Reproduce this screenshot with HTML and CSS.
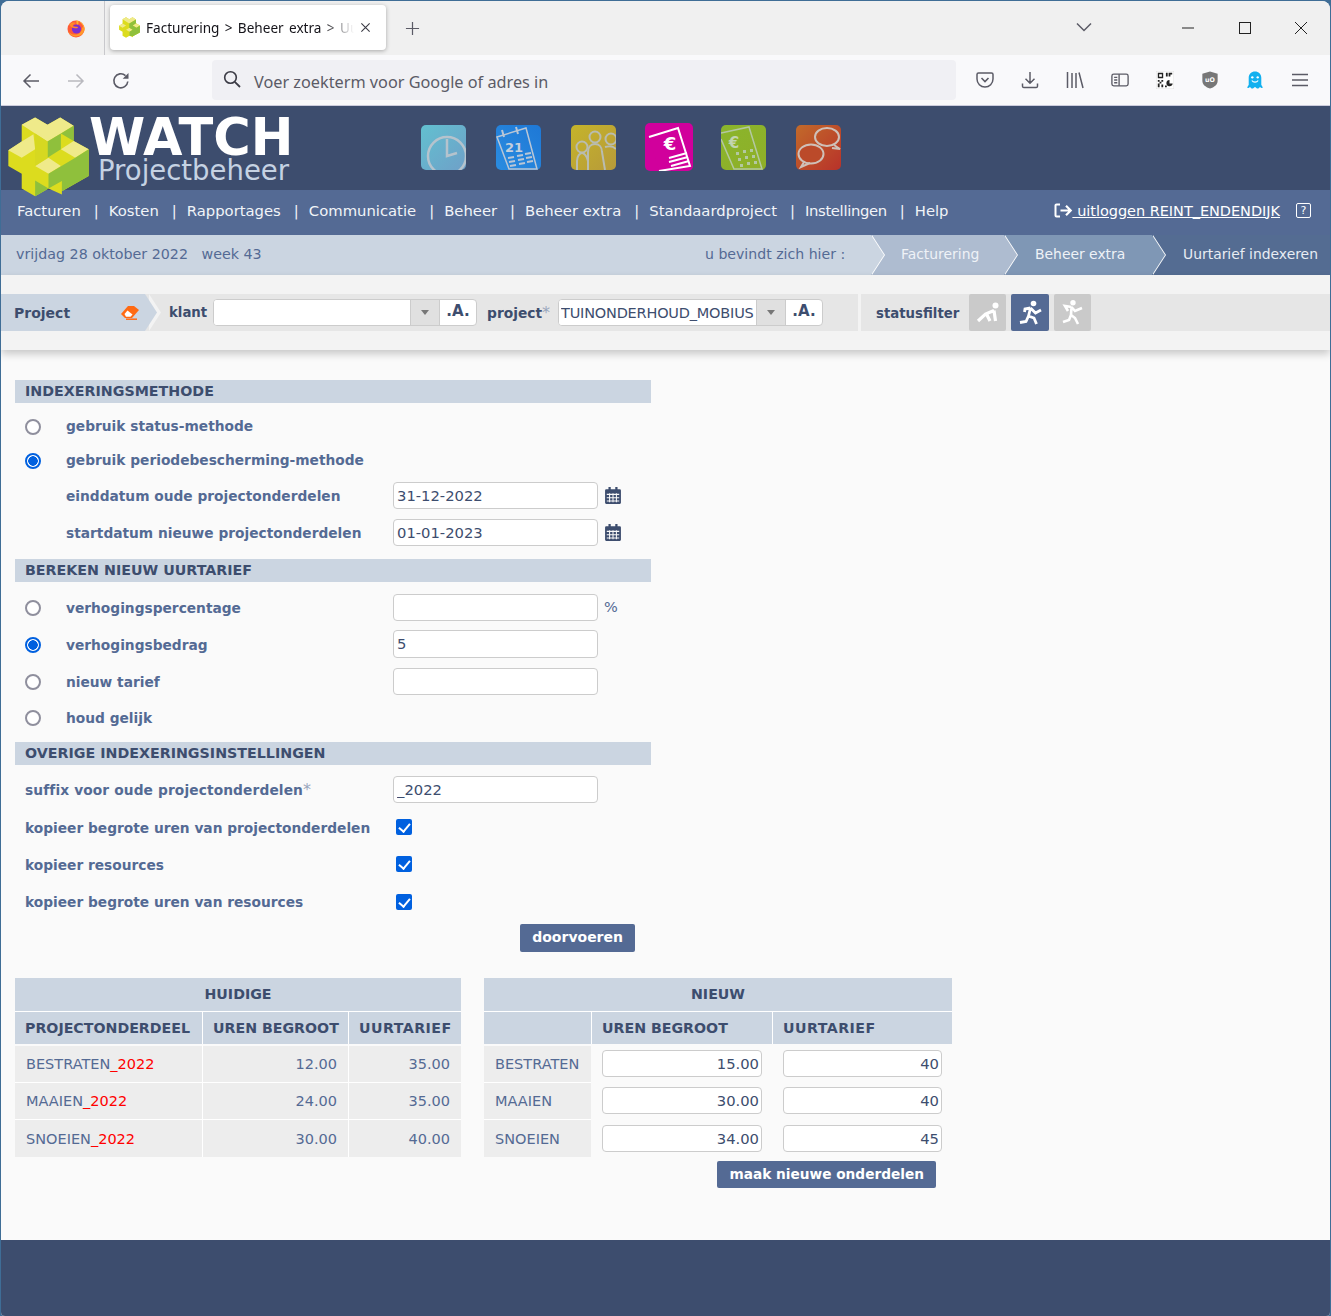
FILE: index.html
```html
<!DOCTYPE html>
<html lang="nl">
<head>
<meta charset="utf-8">
<title>Facturering &gt; Beheer extra &gt; Uurtarief indexeren</title>
<link rel="stylesheet" href="styles.css">
</head>
<body>
<div class="window">
  <div class="tabbar">
    <div class="ff-slot">
      <svg class="ff" viewBox="0 0 20 20"><circle cx="10" cy="11" r="8.5" fill="#ff5a36"/><path d="M10 2.500c5 .5 8.500 4 8.500 8.500 0 1-.2 2-.5 2.800C18.500 8 15 4 12 3.500c1 1.500.5 3-.5 3.500C10 6.500 11 4 10 2.500z" fill="#ffb62c"/><path d="M18.400 9.500c.5 5-3 9-8.400 9-4 0-7-2.500-8-5.500 2 3 5.500 4 8 3.500 4-.5 6-3.500 6-6 0-1.500 1.500-1.500 2.400-1z" fill="#ff9a2a"/><circle cx="10.500" cy="11" r="4.600" fill="#7b2fd0"/><path d="M3 6.500c2-2 5-2.500 7-1.500-1.500.5-3 1.500-3.500 3 2 1 5 .2 5.500 1.500-1 1.500-3 .5-4.500.5C5.500 9.500 4 8 3 6.500z" fill="#ff8a2a"/></svg>
    </div>
    <div class="tab">
      <svg class="favicon" viewBox="24 19 242 238"><path d="M65 42L105 20 142 42 180 20 220 45V90L265 115V195L185 240V250L145 232 105 255 65 232V188L25 165V118L65 92z" fill="#dcdc1e"/><path d="M65 42L105 20 142 42 180 20 220 45 182 68 142 92 105 68zM25 118L65 92 105 115 65 140zM220 90L265 115 225 140 182 115zM105 165L145 140 182 165 145 188z" fill="#efea8a"/><path d="M142 92L182 68 220 45V90L182 115 225 140 265 115V195L185 240 145 232V188L182 165 142 140z" fill="#8fc03c"/></svg>
      <span class="tab-title">Facturering &gt; Beheer extra &gt; Uurtarief indexeren</span>
      <svg class="tab-close" viewBox="0 0 12 12"><path d="M1.500 1.500l9 9M10.500 1.500l-9 9" stroke="#3b3b45" stroke-width="1.200" fill="none"/></svg>
    </div>
    <svg class="newtab" viewBox="0 0 16 16"><path d="M8 1v14M1 8h14" stroke="#5b5b66" stroke-width="1.300" fill="none"/></svg>
    <div class="tabbar-fill"></div>
    <svg class="tablist" viewBox="0 0 16 10"><path d="M1 1.500l7 7 7-7" stroke="#5b5b66" stroke-width="1.500" fill="none"/></svg>
    <svg class="winbtn minim" viewBox="0 0 12 12"><path d="M0 6h12" stroke="#222" stroke-width="1" fill="none"/></svg>
    <svg class="winbtn maxim" viewBox="0 0 12 12"><rect x=".5" y=".5" width="11" height="11" stroke="#222" fill="none"/></svg>
    <svg class="winbtn closew" viewBox="0 0 12 12"><path d="M0 0l12 12M12 0L0 12" stroke="#222" stroke-width="1" fill="none"/></svg>
  </div>

  <div class="toolbar">
    <svg class="tool t-back" viewBox="0 0 18 16"><path d="M17 8H2M8.500 1.500L2 8l6.500 6.500" stroke="#5b5b66" stroke-width="1.500" fill="none"/></svg>
    <svg class="tool t-fwd" viewBox="0 0 18 16"><path d="M1 8h15M9.500 1.500L16 8l-6.500 6.500" stroke="#b9b9bf" stroke-width="1.500" fill="none"/></svg>
    <svg class="tool t-reload" viewBox="0 0 18 18"><path d="M15.800 9.500A7 7 0 1 1 13.500 3.600" stroke="#5b5b66" stroke-width="1.600" fill="none"/><path d="M16.500 1v5.800h-5.800z" fill="#5b5b66"/></svg>
    <div class="urlbar">
      <svg class="mag" viewBox="0 0 18 18"><circle cx="7.500" cy="7.500" r="5.800" stroke="#3b3b45" stroke-width="1.600" fill="none"/><path d="M11.800 11.800l5.200 5.200" stroke="#3b3b45" stroke-width="1.800" fill="none"/></svg>
      <span class="url-text">Voer zoekterm voor Google of adres in</span>
    </div>
    <div class="tools-right">
      <svg class="rt" viewBox="0 0 18 16"><path d="M2.500 1h13A1.500 1.500 0 0 1 17 2.500V7a8 8 0 0 1-16 0V2.500A1.500 1.500 0 0 1 2.500 1z" stroke="#5b5b66" stroke-width="1.500" fill="none"/><path d="M5.500 6L9 9.500 12.500 6" stroke="#5b5b66" stroke-width="1.600" fill="none"/></svg>
      <svg class="rt" viewBox="0 0 18 18"><path d="M9 1v11M4.500 7.800L9 12.300l4.500-4.500M1.500 12.500v2.800a1.300 1.300 0 0 0 1.300 1.200h12.400a1.300 1.300 0 0 0 1.300-1.200v-2.800" stroke="#5b5b66" stroke-width="1.500" fill="none"/></svg>
      <svg class="rt" viewBox="0 0 18 18"><path d="M1.500 1v16M6 2v15M10 2v15M13 1.500L17 17" stroke="#5b5b66" stroke-width="1.500" fill="none"/></svg>
      <svg class="rt" viewBox="0 0 20 16"><rect x="1" y="1.500" width="18" height="13" rx="2" stroke="#5b5b66" stroke-width="1.500" fill="none"/><path d="M9 1.500v13M3.500 5H7M3.500 8H7M3.500 11H7" stroke="#5b5b66" stroke-width="1.500" fill="none"/></svg>
      <svg class="rt" viewBox="0 0 20 20"><rect width="20" height="20" fill="#fff" stroke="#ddd"/><path d="M2 2h6v6H2zM3.500 3.500v3h3v-3zM11 2h2v4h-2zM14 2h4v2h-2v2h-2zM2 10h2v2H2zM6 10h2v2H6zM4 12h2v2H4zM2 14h2v4H2zM6 15h2v3H6zM10 16h2v2h-2z" fill="#222"/><path d="M15 10v4h3.500A3.500 3.500 0 1 1 15 10z" fill="#222"/></svg>
      <svg class="rt" viewBox="0 0 18 20"><path d="M9 .5L17.500 3v8c0 4-4 7-8.500 8.500C4.500 18 .5 15 .5 11V3z" fill="#777"/><text class="ub" x="9" y="12.500" text-anchor="middle">uO</text></svg>
      <svg class="rt" viewBox="0 0 18 20"><path d="M9 .5c4 0 7 3 7 7v8c1 1 1.500 2 1.500 3.500-1.500 0-2.500-.5-3-1.500-.5 1-1.500 2-2.500 2s-2-1-3-2c-1 1-2 2-3 2s-2-1-2.500-2c-.5 1-1.500 1.500-3 1.500 0-1.500.5-2.500 1.500-3.500v-8c0-4 3-7 7-7z" fill="#12b0ef"/><circle cx="6" cy="7" r="1.300" fill="#fff"/><circle cx="12" cy="7" r="1.300" fill="#fff"/><path d="M5.500 10.500c1.500 2.500 5.500 2.500 7 0" stroke="#fff" stroke-width="1.200" fill="none"/></svg>
      <svg class="rt rt-menu" viewBox="0 0 16 14"><path d="M0 1.500h16M0 7h16M0 12.500h16" stroke="#5b5b66" stroke-width="1.500" fill="none"/></svg>
    </div>
  </div>

  <header class="site-head">
    <svg class="logo" viewBox="24 19 242 238">
      <path d="M65 42L105 20 142 42 180 20 220 45V90L265 115V195L185 240V250L145 232 105 255 65 232V188L25 165V118L65 92z" fill="#dcdc1e"/>
      <path d="M65 42L105 20 142 42 180 20 220 45 182 68 142 92 105 68z" fill="#efea8a"/>
      <path d="M25 118L65 92 100 70 105 115 65 140z" fill="#efea8a"/>
      <path d="M220 90L265 115 225 140 182 115z" fill="#efea8a"/>
      <path d="M105 165L145 140 182 165 145 188z" fill="#efea8a"/>
      <path d="M142 92L182 68V115L142 140z" fill="#8fc03c"/>
      <path d="M182 68L220 45V90L182 68z" fill="#8fc03c"/>
      <path d="M145 188L225 140 265 115V195L185 240V210L145 232z" fill="#8fc03c"/>
      <path d="M105 208L145 232 105 255z" fill="#8fc03c"/>
      <path d="M105 68L142 92V140L105 165z" fill="#d6d821"/>
    </svg>
    <div class="brand">
      <div class="brand-main">WATCH</div>
      <div class="brand-sub">Projectbeheer</div>
    </div>
    <div class="apps">
      <svg class="app" viewBox="0 0 45 45"><defs><linearGradient id="g1" x1="0" y1="0" x2="1" y2="1"><stop offset="0" stop-color="#62c0d0"/><stop offset="1" stop-color="#6fa0c8"/></linearGradient><clipPath id="c"><rect width="45" height="45" rx="5"/></clipPath></defs><rect width="45" height="45" rx="5" fill="url(#g1)"/><g clip-path="url(#c)"><circle cx="26" cy="31" r="19" stroke="#b5c3cd" stroke-width="2.500" fill="none"/><path d="M26 14v17l10-3" stroke="#b5c3cd" stroke-width="2.500" fill="none"/></g></svg>
      <svg class="app" viewBox="0 0 45 45"><defs><linearGradient id="g2" x1="1" y1="0" x2="0" y2="1"><stop offset="0" stop-color="#1e78d6"/><stop offset="1" stop-color="#2a8ce0"/></linearGradient></defs><rect width="45" height="45" rx="5" fill="url(#g2)"/><path d="M1 12L30 3 41 44H13z" stroke="#b9c6d6" stroke-width="1.500" fill="none"/><path d="M6 5l2 7M20 2l2 7" stroke="#b9c6d6" stroke-width="2" fill="none"/><text class="cal-num" x="18" y="27" text-anchor="middle">21</text><path d="M12 33l6-1M21 31l6-1M29 29l6-1M13 37l6-1M22 35l6-1M30 33l6-1M14 41l6-1M23 39l6-1M31 37l6-1" stroke="#b9c6d6" stroke-width="2"/></svg>
      <svg class="app" viewBox="0 0 45 45"><defs><linearGradient id="g3" x1="0" y1="0" x2="1" y2="1"><stop offset="0" stop-color="#c5b42a"/><stop offset="1" stop-color="#b79a3a"/></linearGradient><clipPath id="c3"><rect width="45" height="45" rx="5"/></clipPath></defs><rect width="45" height="45" rx="5" fill="url(#g3)"/><g stroke="#b9bcb0" stroke-width="2" fill="none" clip-path="url(#c3)"><circle cx="11" cy="22" r="5.500"/><circle cx="24" cy="12" r="5.500"/><circle cx="40" cy="14" r="5.500"/><path d="M6 45V36c0-5 3-8 5-8s5 3 6 8v9M17 45V27c0-5 3-8 7-8s7 3 7 8l3 18M34 22c3-1 8-1 11 2"/></g></svg>
      <svg class="app app-big" viewBox="0 0 48 48"><rect width="48" height="48" rx="5" fill="#d1009c"/><path d="M4 14L33 5 45 43 14 48" stroke="#fff" stroke-width="2" fill="#d1009c"/><text class="euro" x="25" y="27" text-anchor="middle">€</text><path d="M24 35l18-5M24 39l19-5M26 43l18-5" stroke="#fff" stroke-width="2"/></svg>
      <svg class="app" viewBox="0 0 45 45"><defs><linearGradient id="g5" x1="0" y1="0" x2="1" y2="1"><stop offset="0" stop-color="#8ab52c"/><stop offset="1" stop-color="#8faf28"/></linearGradient></defs><rect width="45" height="45" rx="5" fill="url(#g5)"/><path d="M0 8L28 2 41 44H13L0 14" stroke="#b3c8a0" stroke-width="1.500" fill="none"/><text class="euro2" x="13" y="23" text-anchor="middle">€</text><g fill="#b3c8a0"><rect x="15" y="27" width="3" height="3"/><rect x="22" y="25" width="3" height="3"/><rect x="29" y="24" width="3" height="3"/><rect x="17" y="33" width="3" height="3"/><rect x="24" y="31" width="3" height="3"/><rect x="31" y="30" width="3" height="3"/><rect x="19" y="39" width="3" height="3"/><rect x="26" y="37" width="3" height="3"/><rect x="33" y="36" width="3" height="3"/></g></svg>
      <svg class="app" viewBox="0 0 45 45"><defs><linearGradient id="g6" x1="0" y1="0" x2="1" y2="1"><stop offset="0" stop-color="#c26a2a"/><stop offset="1" stop-color="#b8322a"/></linearGradient></defs><rect width="45" height="45" rx="5" fill="url(#g6)"/><g stroke="#cfc0b8" stroke-width="2" fill="none"><ellipse cx="31" cy="12" rx="12" ry="9"/><path d="M38 20l6 4-8-1"/><ellipse cx="15" cy="29" rx="12.500" ry="9.500" fill="#bb4a2a"/><path d="M8 37l-3 5 9-4"/></g></svg>
    </div>
  </header>

  <nav class="mainnav">
    <ul class="menu">
      <li>Facturen</li><li>Kosten</li><li>Rapportages</li><li>Communicatie</li><li>Beheer</li><li>Beheer extra</li><li>Standaardproject</li><li class="tight">Instellingen</li><li>Help</li>
    </ul>
    <div class="userbox">
      <a class="logout"><svg class="logout-ic" viewBox="0 0 19 15"><path d="M6 1.500H2.500a1 1 0 0 0-1 1v10a1 1 0 0 0 1 1H6" stroke="#fff" stroke-width="2" fill="none"/><path d="M6.500 7.500H17M12 2.800l4.700 4.700L12 12.200" stroke="#fff" stroke-width="2.200" fill="none"/></svg><span class="logout-t"> uitloggen REINT_ENDENDIJK</span></a>
      <span class="helpbox">?</span>
    </div>
  </nav>

  <div class="crumbbar">
    <div class="today">vrijdag 28 oktober 2022 &nbsp; week 43</div>
    <div class="crumbs">
      <div class="crumb c0">u bevindt zich hier :</div>
      <div class="crumb c1">Facturering</div>
      <div class="crumb c2">Beheer extra</div>
      <div class="crumb c3">Uurtarief indexeren</div>
    </div>
  </div>

  <div class="filterwrap">
    <div class="filter">
      <div class="filter-left">
        <div class="proj-tab">
          <span>Project</span>
          <svg class="eraser" viewBox="0 0 18 14"><path d="M0 8l7-8h6l5 4-7 8H4z" fill="#ff6a13"/><path d="M3.500 8l3-3.500 5 4-2 2.200H5z" fill="#fff"/><path d="M5 13.200h11" stroke="#ff6a13" stroke-width="1.500"/></svg>
        </div>
        <label class="f-label f-klant">klant</label>
        <div class="combo c-klant"><input class="combo-in" type="text" value=""><span class="combo-dd"><i class="caret"></i></span><span class="combo-a">.A.</span></div>
        <label class="f-label f-proj">project<em class="star">*</em></label>
        <div class="combo c-proj"><input class="combo-in" type="text" value="TUINONDERHOUD_MOBIUS"><span class="combo-dd"><i class="caret"></i></span><span class="combo-a">.A.</span></div>
      </div>
      <div class="filter-right">
        <span class="f-label f-status">statusfilter</span>
        <span class="stat s1"><svg viewBox="0 0 26 26"><circle cx="20.500" cy="5.500" r="3" fill="#fff"/><path d="M19 10.500L10.500 14 3 21M12 15l3 6M19 10.500l1.500 10.500" stroke="#fff" stroke-width="3.200" fill="none"/></svg></span>
        <span class="stat s2"><svg viewBox="0 0 26 26"><circle cx="16.500" cy="3.500" r="2.800" fill="#fff"/><path d="M13.500 8L11.500 16 17 18 19.500 24M11.500 16L9 21.500 3 22.500M13.500 8L18.500 13 24 10M13.500 8L8 9 7.500 12" stroke="#fff" stroke-width="2.800" fill="none"/></svg></span>
        <span class="stat s3"><svg viewBox="0 0 26 26"><circle cx="13" cy="2.800" r="2.700" fill="#fff"/><path d="M11.500 7L11 15 15 18 18 24M11 15L9 20 3 22M11.500 7L15 11 22 8M11.500 7L5 6 8 11" stroke="#fff" stroke-width="2.600" fill="none"/></svg></span>
      </div>
    </div>
  </div>

  <main class="content">
    <h2 class="bar">INDEXERINGSMETHODE</h2>
    <div class="rows rows-a">
      <div class="row"><input class="radio" type="radio" name="m"><span class="lab">gebruik status-methode</span></div>
      <div class="row"><input class="radio" type="radio" name="m" checked><span class="lab">gebruik periodebescherming-methode</span></div>
      <div class="row"><span class="lab ind">einddatum oude projectonderdelen</span><input class="txt" type="text" value="31-12-2022"><svg class="cal" viewBox="0 0 14 15"><path d="M3 0h2v2h4V0h2v2h2a1 1 0 0 1 1 1v11a1 1 0 0 1-1 1H1a1 1 0 0 1-1-1V3a1 1 0 0 1 1-1h2z" fill="#3d4d6e"/><path d="M1.500 6.500h11M1.500 9.500h11M1.500 12.300h11M4 5.500v8M7 5.500v8M10 5.500v8" stroke="#fafafa" stroke-width=".9"/></svg></div>
      <div class="row"><span class="lab ind">startdatum nieuwe projectonderdelen</span><input class="txt" type="text" value="01-01-2023"><svg class="cal" viewBox="0 0 14 15"><path d="M3 0h2v2h4V0h2v2h2a1 1 0 0 1 1 1v11a1 1 0 0 1-1 1H1a1 1 0 0 1-1-1V3a1 1 0 0 1 1-1h2z" fill="#3d4d6e"/><path d="M1.500 6.500h11M1.500 9.500h11M1.500 12.300h11M4 5.500v8M7 5.500v8M10 5.500v8" stroke="#fafafa" stroke-width=".9"/></svg></div>
    </div>
    <h2 class="bar">BEREKEN NIEUW UURTARIEF</h2>
    <div class="rows rows-b">
      <div class="row"><input class="radio" type="radio" name="b"><span class="lab ind2">verhogingspercentage</span><input class="txt" type="text" value=""><span class="pct">%</span></div>
      <div class="row"><input class="radio" type="radio" name="b" checked><span class="lab ind2">verhogingsbedrag</span><input class="txt tall" type="text" value="5"></div>
      <div class="row"><input class="radio" type="radio" name="b"><span class="lab ind2">nieuw tarief</span><input class="txt" type="text" value=""></div>
      <div class="row"><input class="radio" type="radio" name="b"><span class="lab">houd gelijk</span></div>
    </div>
    <h2 class="bar">OVERIGE INDEXERINGSINSTELLINGEN</h2>
    <div class="rows rows-c">
      <div class="row row-plain"><span class="lab w368 wide">suffix voor oude projectonderdelen<em class="star">*</em></span><input class="txt" type="text" value="_2022"></div>
      <div class="row row-plain"><span class="lab w368">kopieer begrote uren van projectonderdelen</span><input class="check" type="checkbox" checked></div>
      <div class="row row-plain"><span class="lab w368">kopieer resources</span><input class="check" type="checkbox" checked></div>
      <div class="row row-plain"><span class="lab w368">kopieer begrote uren van resources</span><input class="check" type="checkbox" checked></div>
    </div>
    <div class="act act-1"><button class="btn" type="button">doorvoeren</button></div>

    <div class="tables">
      <table class="grid g-old">
        <colgroup><col class="o1"><col class="o2"><col class="o3"></colgroup>
        <thead>
          <tr class="hr1"><th colspan="3" class="ctr">HUIDIGE</th></tr>
          <tr class="hr2"><th>PROJECTONDERDEEL</th><th>UREN BEGROOT</th><th class="spaced">UURTARIEF</th></tr>
        </thead>
        <tbody>
          <tr><td>BESTRATEN<span class="red">_2022</span></td><td class="num">12.00</td><td class="num">35.00</td></tr>
          <tr><td>MAAIEN<span class="red">_2022</span></td><td class="num">24.00</td><td class="num">35.00</td></tr>
          <tr class="tr3"><td>SNOEIEN<span class="red">_2022</span></td><td class="num">30.00</td><td class="num">40.00</td></tr>
        </tbody>
      </table>
      <div class="newwrap">
        <table class="grid g-new">
          <colgroup><col class="n1"><col class="n2"><col class="n3"></colgroup>
          <thead>
            <tr class="hr1"><th colspan="3" class="ctr">NIEUW</th></tr>
            <tr class="hr2"><th></th><th>UREN BEGROOT</th><th class="spaced">UURTARIEF</th></tr>
          </thead>
          <tbody>
            <tr><td>BESTRATEN</td><td class="inp"><input class="txt r" type="text" value="15.00"></td><td class="inp"><input class="txt r" type="text" value="40"></td></tr>
            <tr><td>MAAIEN</td><td class="inp"><input class="txt r" type="text" value="30.00"></td><td class="inp"><input class="txt r" type="text" value="40"></td></tr>
            <tr class="tr3"><td>SNOEIEN</td><td class="inp"><input class="txt r" type="text" value="34.00"></td><td class="inp"><input class="txt r" type="text" value="45"></td></tr>
          </tbody>
        </table>
        <div class="act act-2"><button class="btn btn-2" type="button">maak nieuwe onderdelen</button></div>
      </div>
    </div>
  </main>
  <footer class="site-foot"></footer>
</div>
</body>
</html>
```
FILE: styles.css
```css
* { box-sizing: border-box; }
html, body { margin: 0; padding: 0; }
body { background: #3f6d96; width: 1331px; height: 1316px; overflow: hidden; font-family: "DejaVu Sans", Verdana, sans-serif; }
.window { margin: 1px 1px 0 1px; height: 1315px; background: #fafafa; border-radius: 8px 8px 4px 4px; overflow: hidden; display: flex; flex-direction: column; }

/* browser chrome */
.tabbar { height: 54px; background: #f0f0f0; display: flex; align-items: flex-start; flex: none; font-family: "Noto Sans", sans-serif; }
.ff-slot { width: 104px; height: 54px; border-right: 1px solid #c8c8cc; display: flex; align-items: center; justify-content: flex-end; padding: 0 18px 0 0; flex: none; }
.ff { width: 20px; height: 20px; margin-top: -1px; }
.tab { width: 276px; height: 45px; margin: 4px 0 0 5px; background: #fff; border-radius: 4px; box-shadow: 0 1px 4px rgba(0,0,0,.3); display: flex; align-items: center; padding: 0 13px 0 9px; flex: none; }
.favicon { width: 21px; height: 21px; flex: none; }
.tab-title { margin-left: 6px; width: 208px; overflow: hidden; white-space: nowrap; font-size: 13.600px; word-spacing: 1.800px; color: #15141a; -webkit-mask-image: linear-gradient(90deg, #000 178px, transparent 208px); mask-image: linear-gradient(90deg, #000 178px, transparent 208px); }
.tab-close { width: 11px; height: 11px; margin-left: 6px; flex: none; }
.newtab { width: 15px; height: 15px; margin: 20px 0 0 19px; flex: none; }
.tabbar-fill { flex: 1; }
.tablist { width: 16px; height: 10px; margin: 21px 90px 0 0; flex: none; }
.winbtn { width: 12px; height: 12px; flex: none; margin-top: 21px; }
.minim { margin-right: 45px; }
.maxim { margin-right: 44px; }
.closew { margin-right: 23px; }

.toolbar { height: 51px; background: #f9f9fb; display: flex; align-items: center; flex: none; border-bottom: 1px solid #ccd; font-family: "Noto Sans", sans-serif; }
.tool { flex: none; margin-top: 2px; }
.t-back { width: 18px; height: 16px; margin-left: 21px; }
.t-fwd { width: 18px; height: 16px; margin-left: 27px; }
.t-reload { width: 18px; height: 18px; margin-left: 27px; }
.urlbar { margin-left: 82px; width: 744px; height: 40px; background: #f0f0f4; border-radius: 4px; display: flex; align-items: center; padding-left: 11px; flex: none; margin-top: -1px; }
.mag { width: 18px; height: 18px; flex: none; margin-top: -2px; }
.url-text { margin-left: 13px; font-size: 16.250px; color: #5b5b66; white-space: nowrap; padding-top: 4px; }
.tools-right { display: flex; align-items: center; margin-left: 20px; }
.rt { width: 18px; height: 18px; flex: none; margin-right: 27px; }
.rt-menu { width: 16px; margin-left: 1px; }
.ub { font: bold 7px "DejaVu Sans", sans-serif; fill: #fff; }

/* site header */
.site-head { height: 84px; background: #3d4d6e; display: flex; flex: none; position: relative; }
.logo { width: 81px; height: 80px; margin: 11px 0 0 7px; flex: none; }
.brand { width: 332px; flex: none; }
.brand-main { font: bold 51px/38px "DejaVu Sans", sans-serif; color: #fff; margin-top: 12.500px; height: 38px; }
.brand-sub { font: 27.500px/1 "DejaVu Sans", sans-serif; color: #c5d2e3; margin: 0 0 0 9px; }
.apps { display: flex; align-items: center; gap: 30px; height: 84px; padding-bottom: 2px; }
.app { width: 45px; height: 45px; flex: none; }
.app-big { width: 48px; height: 48px; margin: 0 -1.500px; }
.cal-num { font: bold 13px "DejaVu Sans", sans-serif; fill: #c4cfdd; }
.euro { font: bold 18px "DejaVu Sans", sans-serif; fill: #fff; }
.euro2 { font: bold 15px "DejaVu Sans", sans-serif; fill: #c3d4b0; }

.mainnav { height: 45px; background: #546a94; display: flex; align-items: center; justify-content: space-between; color: #fff; flex: none; font-size: 14.800px; padding-bottom: 4px; }
.menu { list-style: none; margin: 0; padding: 0 0 0 16px; display: flex; }
.menu li { white-space: nowrap; color: #f1f4f8; }
.menu li + li { padding-left: 14px; margin-left: 14px; position: relative; }
.menu li + li::before { content: "|"; position: absolute; left: -1px; top: 0; }
.menu li.tight { letter-spacing: -.35px; }
.userbox { display: flex; align-items: center; padding-right: 19px; }
.logout { display: flex; align-items: center; color: #fff; text-decoration: underline; white-space: pre; }
.logout-ic { width: 19px; height: 15px; flex: none; }
.logout-t { text-decoration: underline; font-size: 14.500px; letter-spacing: -.04px; }
.helpbox { width: 15px; height: 15px; border: 1px solid #fff; border-radius: 2px; margin-left: 16px; font-size: 11px; line-height: 13px; text-align: center; }

.crumbbar { height: 40px; background: #cbd5e1; display: flex; justify-content: space-between; align-items: center; color: #546a94; flex: none; font-size: 14.100px; }
.today { padding: 0 0 2px 15px; white-space: pre; font-size: 14.250px; }
.crumbs { display: flex; height: 40px; }
.crumb { position: relative; display: flex; align-items: center; white-space: nowrap; height: 40px; padding-bottom: 2px; }
.crumb::before, .crumb::after { content: ""; position: absolute; top: 0; height: 40px; width: 13px; clip-path: polygon(0 0, 100% 50%, 0 100%); }
.crumb::before { left: calc(100% + 1px); background: #fff; z-index: 1; }
.crumb::after { left: 100%; z-index: 2; background: inherit; }
.c3::before, .c3::after { display: none; }
.c0 { background: #cbd5e1; width: 171px; color: #546a94; padding-left: 5px; }
.c1 { background: #aebcd0; width: 133px; padding-left: 30px; color: #eef2f7; font-size: 13.900px; }
.c2 { background: #7f97b5; width: 148px; padding-left: 31px; color: #eef2f7; font-size: 13.900px; }
.c3 { background: #546c92; width: 178px; padding-left: 31px; color: #e8edf4; font-size: 13.900px; }

.filterwrap { height: 75px; background: #f3f3f3; padding-top: 19px; flex: none; box-shadow: 0 4px 8px rgba(0,0,0,.2); position: relative; }
.filter { height: 37px; display: flex; gap: 3px; font-size: 14px; }
.filter-left { width: 857px; background: #e6e6e6; display: flex; align-items: center; flex: none; }
.filter-right { flex: 1; background: #e6e6e6; display: flex; align-items: center; padding-left: 15px; }
.proj-tab { position: relative; width: 144px; height: 37px; background: #cbd5e1; display: flex; align-items: center; justify-content: space-between; padding: 0 6px 0 13px; font-weight: bold; color: #3d4d6e; flex: none; }
.proj-tab::before, .proj-tab::after { content: ""; position: absolute; top: 0; height: 37px; width: 12px; clip-path: polygon(0 0, 100% 50%, 0 100%); }
.proj-tab::before { left: calc(100% + 4px); background: #f3f3f3; z-index: 1; }
.proj-tab::after { left: 100%; background: #cbd5e1; z-index: 2; }
.eraser { width: 18px; height: 14px; }
.f-label { font-weight: bold; color: #3d4d6e; white-space: nowrap; }
.f-klant { margin-left: 24px; width: 44px; font-size: 13.300px; }
.f-proj { margin-left: 10px; width: 71px; font-size: 13.800px; }
.star { color: #9aa7bd; font-style: normal; font-weight: normal; font-size: 16px; line-height: 0; }
.combo { display: flex; height: 27px; background: #fff; border: 1px solid #ccc; border-radius: 4px; overflow: hidden; flex: none; }
.c-klant { width: 264px; }
.c-proj { width: 265px; }
.combo-in { flex: 1; min-width: 0; border: 0; background: #fff; font: 14.500px "DejaVu Sans", sans-serif; color: #3d4d6e; padding: 0 2px; outline: 0; letter-spacing: -.2px; }
.combo-dd { width: 29px; background: #e0e0e0; border-left: 1px solid #ccc; display: flex; align-items: center; justify-content: center; flex: none; }
.caret { width: 0; height: 0; border: 4.500px solid transparent; border-top: 5px solid #777; border-bottom: 0; }
.combo-a { width: 37px; border-left: 1px solid #ccc; font-weight: bold; text-align: center; color: #3d4d6e; line-height: 22px; flex: none; font-size: 15px; }
.f-status { width: 93px; font-size: 13.300px; padding-top: 2px; }
.stat { width: 37px; height: 37px; background: #cacaca; display: flex; align-items: center; justify-content: center; flex: none; margin-right: 5px; border-radius: 2px; }
.stat svg { width: 26px; height: 26px; }
.s2 { background: #546a94; width: 38px; }
.s3 { background: #cacaca; }

/* form */
.content { flex: 1; padding: 30px 0 0 14px; color: #546a94; font-size: 14.500px; }
.bar { margin: 0; width: 636px; height: 23px; background: #cbd5e1; font-size: 14.250px; font-weight: bold; color: #3d4d6e; line-height: 23px; padding-left: 10px; }
.rows { display: grid; width: 636px; }
.rows-a { grid-template-rows: 34px 34px 37px 37px; padding: 6px 0 8px; }
.rows-b { grid-template-rows: 34px 40px 34px 38px; padding: 8px 0 6px; }
.rows-c { grid-template-rows: 36px 40px 34px 41px; padding: 6px 0 2px; }
.row { display: flex; align-items: center; padding-left: 10px; }
.lab { font-weight: bold; font-size: 13.750px; color: #546a94; white-space: nowrap; }
.lab.wide { letter-spacing: .12px; }
.rows-b .lab { padding-top: 2px; }
.rows-c .lab { padding-top: 1px; }
.radio { appearance: none; -webkit-appearance: none; width: 16px; height: 16px; border: 2px solid #8f8f9d; border-radius: 50%; background: #fff; margin: 0 25px 0 0; flex: none; position: relative; top: 1px; }
.radio:checked { border-color: #0060df; background: radial-gradient(circle, #0060df 0 4.500px, #fff 5px); }
.lab.ind { margin-left: 41px; width: 327px; }
.lab.ind2 { width: 327px; }
.w368 { width: 368px; }
.txt { width: 205px; height: 27px; border: 1px solid #ccc; border-radius: 4px; background: #fff; font: 14.750px "DejaVu Sans", sans-serif; color: #3d4d6e; padding: 0 3px; outline: 0; flex: none; }
.txt.tall { height: 28px; margin-top: -1px; }
.txt.r { text-align: right; padding-right: 2px; }
.cal { width: 16px; height: 17px; margin-left: 7px; flex: none; }
.pct { margin-left: 6px; }
.check { appearance: none; -webkit-appearance: none; width: 16px; height: 16px; border-radius: 2px; background: #0060df; margin: 0 0 0 3px; flex: none; position: relative; }
.check::after { content: ""; position: absolute; left: 5px; top: 2px; width: 5px; height: 9px; border: solid #fff; border-width: 0 2px 2px 0; transform: rotate(40deg); }
.act { display: flex; }
.act-1 { width: 620px; justify-content: flex-end; }
.act-2 { justify-content: flex-end; padding-right: 16px; margin-top: 4px; }
.btn { height: 28px; padding: 0 12px 2px; border: 0; border-radius: 2px; background: #546a94; color: #fff; font: bold 14px "DejaVu Sans", sans-serif; }
.btn-2 { height: 27px; font-size: 13.700px; }

.tables { display: flex; gap: 23px; margin-top: 26px; align-items: flex-start; }
.grid { border-collapse: separate; border-spacing: 0; table-layout: fixed; }
.g-old { width: 446px; }
.g-new { width: 468px; }
.newwrap { width: 468px; }
.o1 { width: 187px; } .o2 { width: 146px; } .o3 { width: 113px; }
.n1 { width: 107px; } .n2 { width: 181px; } .n3 { width: 180px; }
.grid th { background: #cbd5e1; color: #3d4d6e; font-size: 14.200px; font-weight: bold; text-align: left; padding: 0 0 2px 10px; white-space: nowrap; border-left: 1px solid #fff; border-top: 1px solid #fff; }
.grid th:first-child { border-left: 0; }
.grid th.spaced { letter-spacing: .45px; }
.hr1 th { height: 33px; text-align: center; border-top: 0; padding-left: 0; }
.grid .hr2 th { height: 33px; padding-bottom: 0; }
.grid td { height: 37.500px; padding: 0 11px 0 11px; background: #ededed; border-left: 1px solid #fff; border-top: 2px solid #fafafa; color: #546a94; white-space: nowrap; font-size: 14.500px; }
.grid tbody tr + tr td { border-top-width: 1px; border-top-color: #fff; }
.grid td:first-child { border-left: 0; }
.grid td.num { text-align: right; font-size: 14.500px; }
.grid .tr3 td { height: 38px; }
.grid td.inp { background: transparent; padding: 0 10px; border-color: #fafafa; }
.inp .txt { width: 100%; }
.red { color: #f00; }
.site-foot { height: 76px; background: #3d4d6e; flex: none; }
```
